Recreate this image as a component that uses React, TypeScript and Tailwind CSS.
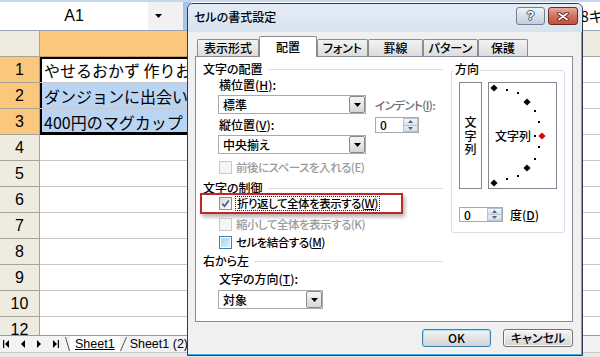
import React from 'react';

const JP = "font-['Noto_Sans_CJK_JP',sans-serif] [font-feature-settings:'palt']";

const rows = [
  { n: '1', text: 'やせるおかず 作りお', sel: true, cell: 'bg-white shadow-[inset_2px_2px_0_#000] border-[#c8c8c8]' },
  { n: '2', text: 'ダンジョンに出会い', sel: true, cell: 'bg-[#bad5f4] shadow-[inset_2px_0_0_#000] border-[#c8c8c8]' },
  { n: '3', text: '400円のマグカップ', sel: true, cell: 'bg-[#bad5f4] shadow-[inset_2px_-2px_0_#000] border-black' },
  { n: '4', text: '', sel: false, cell: 'bg-white border-[#c8c8c8]' },
  { n: '5', text: '', sel: false, cell: 'bg-white border-[#c8c8c8]' },
  { n: '6', text: '', sel: false, cell: 'bg-white border-[#c8c8c8]' },
  { n: '7', text: '', sel: false, cell: 'bg-white border-[#c8c8c8]' },
  { n: '8', text: '', sel: false, cell: 'bg-white border-[#c8c8c8]' },
  { n: '9', text: '', sel: false, cell: 'bg-white border-[#c8c8c8]' },
  { n: '10', text: '', sel: false, cell: 'bg-white border-[#c8c8c8]' },
  { n: '12', text: '', sel: false, cell: 'bg-white border-[#c8c8c8]' },
];

function DownTri() {
  return (
    <svg width="7" height="4" viewBox="0 0 7 4">
      <path d="M0 0h7L3.5 4z" fill="#000" />
    </svg>
  );
}

function Sheet() {
  return (
    <div className="flex h-full flex-col">
      <div className="h-[2px] shrink-0 bg-[#c4d7ee]" />
      <div className="flex h-[29px] shrink-0 border-b border-[#9aa5b3]">
        <div className="flex w-[148px] items-center justify-center bg-white text-[16px]">A1</div>
        <div className="flex w-[35px] items-center bg-[#f1f1f1] pl-[7px]">
          <DownTri />
        </div>
        <div className="w-[8px] bg-[#a9c3e8]" />
        <div className={`flex flex-1 items-center justify-end overflow-hidden bg-white text-[15px] ${JP}`}>
          <span className="-mr-[3px] shrink-0 whitespace-nowrap">8キ</span>
        </div>
      </div>

      <div className="flex h-[26px] shrink-0">
        <div className="w-[40px] shrink-0 border-r border-b border-[#a6a496] bg-[#eeebe1]" />
        <div className="w-[500px] shrink-0 border-r border-b border-[#c99b5e] bg-[#fbc77c]" />
        <div className="flex-1 border-b border-[#a6a496] bg-[#eeebe1]" />
      </div>

      <div className="flex-1 overflow-hidden">
        {rows.map((r) => (
          <div key={r.n} className="flex h-[26px]">
            <div
              className={`flex w-[40px] shrink-0 items-center justify-center border-r border-b border-[#a6a496] text-[16px] ${
                r.sel ? 'bg-[#fbc77c]' : 'bg-[#eeebe1]'
              }`}
            >
              {r.n}
            </div>
            <div
              className={`flex w-[500px] shrink-0 items-center overflow-hidden whitespace-nowrap border-b pl-[4px] font-['Noto_Sans_CJK_JP',sans-serif] text-[16px] leading-none ${r.cell}`}
            >
              {r.text}
            </div>
            <div className="flex-1 border-b border-l border-[#c8c8c8]" />
          </div>
        ))}
      </div>

      <div className="flex h-[17px] shrink-0 items-center border-t border-[#9a9a9a] bg-[#f3f3f3] text-[12.5px]">
        <svg className="ml-[3px]" width="6" height="8" viewBox="0 0 6 8">
          <rect x="0" y="0" width="1.2" height="8" fill="#000" />
          <path d="M6 0v8L2 4z" fill="#000" />
        </svg>
        <svg className="ml-[12px]" width="4" height="8" viewBox="0 0 4 8">
          <path d="M4 0v8L0 4z" fill="#000" />
        </svg>
        <svg className="ml-[12px]" width="4" height="8" viewBox="0 0 4 8">
          <path d="M0 0v8L4 4z" fill="#000" />
        </svg>
        <svg className="ml-[12px]" width="6" height="8" viewBox="0 0 6 8">
          <path d="M0 0v8L4 4z" fill="#000" />
          <rect x="4.8" y="0" width="1.2" height="8" fill="#000" />
        </svg>
        <div className="ml-[6px] flex h-full items-stretch">
          <svg width="5" height="16" viewBox="0 0 5 16">
            <path d="M0.5 1L4.5 15" stroke="#555" fill="none" />
          </svg>
          <div className="flex items-center bg-white px-[5px] underline">Sheet1</div>
          <svg width="7" height="16" viewBox="0 0 7 16">
            <path d="M6.5 1L0.5 15" stroke="#555" fill="none" />
          </svg>
          <div className="ml-[3px] flex items-center whitespace-nowrap">Sheet1 (2)</div>
        </div>
      </div>
      <div className="h-[5px] shrink-0 border-t border-[#c8c8c8] bg-[#e9e9e9]" />
    </div>
  );
}

function Select({ value, className }: { value: string; className: string }) {
  return (
    <div className={`flex h-[19px] shrink-0 border border-[#a7abb0] bg-white ${className}`}>
      <div className="flex flex-1 items-center pl-[4px] text-[12px] leading-none">{value}</div>
      <div className="flex w-[16px] items-center justify-center rounded-[2px] border border-[#8a8a8a] bg-linear-to-b from-[#f6f6f6] to-[#d6d6d6]">
        <DownTri />
      </div>
    </div>
  );
}

function Spin({ h }: { h: string }) {
  return (
    <div className={`flex w-[44px] shrink-0 border border-[#a7abb0] bg-white ${h}`}>
      <div className="flex flex-1 items-center pl-[4px] text-[12px] leading-none">0</div>
      <div className="flex w-[15px] flex-col">
        <div className="flex flex-1 items-center justify-center border border-[#b8c3d0] bg-linear-to-b from-[#f2f5f9] to-[#d9e2ec]">
          <svg width="5" height="3" viewBox="0 0 5 3">
            <path d="M0 3h5L2.5 0z" fill="#4e6286" />
          </svg>
        </div>
        <div className="flex flex-1 items-center justify-center border border-t-0 border-[#b8c3d0] bg-linear-to-b from-[#e9eef4] to-[#d3dde8]">
          <svg width="5" height="3" viewBox="0 0 5 3">
            <path d="M0 0h5L2.5 3z" fill="#4e6286" />
          </svg>
        </div>
      </div>
    </div>
  );
}

function Check({ kind }: { kind: 'on' | 'off' | 'disabled' | 'hot' }) {
  const box =
    kind === 'disabled'
      ? 'border-[#c9c9c9] bg-[#f4f4f4]'
      : kind === 'hot'
      ? 'border-[#3c7fb1] bg-white'
      : 'border-[#8e8f8f] bg-linear-to-br from-[#dcdcdc] to-white';
  return (
    <span className={`flex h-[13px] w-[13px] shrink-0 items-center justify-center border ${box}`}>
      {kind === 'hot' && <span className="h-[9px] w-[9px] bg-linear-to-br from-[#9fd5f3] to-[#dcf1fb]" />}
      {kind === 'on' && (
        <svg width="11" height="11" viewBox="0 0 11 11">
          <path d="M2.3 5.6L4.5 8.2L8.8 2.4" stroke="#485a8c" strokeWidth="1.7" fill="none" />
        </svg>
      )}
    </span>
  );
}

function GroupLabel({ text, className }: { text: string; className: string }) {
  return (
    <div className={`flex h-[14px] items-center pl-[7px] ${className}`}>
      <span className="shrink-0">{text}</span>
      <span className="ml-[5px] h-px flex-1 bg-[#d5dfe5]" />
    </div>
  );
}

function Arc() {
  const big = [
    [5, 5],
    [38, 19],
    [38, 85],
    [5, 100],
  ];
  const dots = [
    [18, 7],
    [29, 10],
    [46, 28],
    [50, 39],
    [50, 64],
    [46, 76],
    [29, 93],
    [18, 96],
    [46, 53],
  ];
  const dia = (x: number, y: number) => `M${x} ${y - 3.6}L${x + 3.6} ${y}L${x} ${y + 3.6}L${x - 3.6} ${y}Z`;
  return (
    <svg width="67" height="105" viewBox="0 0 67 105">
      {big.map(([x, y]) => (
        <path key={`${x}-${y}`} d={dia(x, y)} fill="#000" />
      ))}
      {dots.map(([x, y]) => (
        <rect key={`${x}-${y}`} x={x - 1} y={y - 1} width="2" height="2" fill="#000" />
      ))}
      <path d={dia(53, 53)} fill="#e00000" />
      <text x="6" y="58" fontSize="12" fontWeight="500" fontFamily="Noto Sans CJK JP, sans-serif" fill="#000">
        文字列
      </text>
    </svg>
  );
}

const tabs = [
  { label: '表示形式', w: 'w-[62px]' },
  { label: '配置', w: 'w-[58px]' },
  { label: 'フォント', w: 'w-[51px]' },
  { label: '罫線', w: 'w-[55px]' },
  { label: 'パターン', w: 'w-[55px]' },
  { label: '保護', w: 'w-[50px]' },
];

function Dialog() {
  return (
    <div
      className={`absolute left-[187px] top-[3px] flex h-[353px] w-[396px] flex-col rounded-t-[6px] border border-[#2f3b4a] bg-[#f0f0f0] text-[12px] font-medium leading-[14px] text-black shadow-[inset_-1px_-1px_0_#47b2e4] ${JP}`}
    >
      <div className="flex h-[28px] shrink-0 items-start rounded-t-[5px] bg-linear-to-b from-[#e4ecf6] to-[#d8e3f0] pl-[6px] pr-[4px] pt-[3px]">
        <div className="mt-[2px] flex-1 leading-[16px]">セルの書式設定</div>
        <div className="flex h-[18px] w-[29px] items-center justify-center rounded-[3px] border border-[#6f7e91] bg-linear-to-b from-[#eef3f9] to-[#bfcee1] font-['Liberation_Sans',sans-serif] text-[13px] font-bold text-white [text-shadow:-1px_0_#4a5563,1px_0_#4a5563,0_-1px_#4a5563,0_1px_#4a5563]">
          ?
        </div>
        <div className="ml-[3px] flex h-[18px] w-[30px] items-center justify-center rounded-[3px] border border-[#6d2b22] bg-linear-to-b from-[#eaa99c] via-[#d2705f] to-[#c44f3d]">
          <svg width="12" height="9" viewBox="0 0 12 9">
            <path d="M2 1.5L10 7.5M10 1.5L2 7.5" stroke="#5a2219" strokeWidth="3.6" strokeLinecap="round" />
            <path d="M2 1.5L10 7.5M10 1.5L2 7.5" stroke="#fff" strokeWidth="1.8" strokeLinecap="round" />
          </svg>
        </div>
      </div>

      <div className="flex h-[24px] shrink-0 items-end pl-[9px]">
        {tabs.map((t) =>
          t.label === '配置' ? (
            <div
              key={t.label}
              className={`relative z-10 -mb-px flex h-[21px] items-center justify-center rounded-t-[2px] border border-b-0 border-[#898c95] bg-white ${t.w}`}
            >
              {t.label}
            </div>
          ) : (
            <div
              key={t.label}
              className={`flex h-[17px] items-center justify-center rounded-t-[2px] border border-b-0 border-[#898c95] bg-linear-to-b from-[#f3f3f3] to-[#dcdcdc] ${t.w}`}
            >
              {t.label}
            </div>
          )
        )}
      </div>

      <div className="ml-[7px] flex h-[266px] w-[378px] shrink-0 border border-[#898c95] bg-white">
        <div className="flex w-[247px] shrink-0 flex-col pt-[5px]">
          <GroupLabel text="文字の配置" className="" />
          <div className="ml-[23px] mt-[2px]">
            横位置(<u>H</u>):
          </div>
          <div className="ml-[22px] mt-[3px] flex items-center">
            <Select value="標準" className="w-[148px]" />
            <span className="ml-[9px] whitespace-nowrap text-[11.5px] tracking-[-0.6px] text-[#6d6d6d]">
              インデント(<u>I</u>):
            </span>
          </div>
          <div className="mt-[3px] flex h-[16px] items-center">
            <span className="w-[179px] shrink-0 pl-[23px]">
              縦位置(<u>V</u>):
            </span>
            <Spin h="h-[16px]" />
          </div>
          <div className="ml-[22px] mt-[2px]">
            <Select value="中央揃え" className="w-[148px]" />
          </div>
          <div className="ml-[23px] mt-[6px] flex h-[14px] items-center text-[11.5px] tracking-[-0.5px] text-[#9a9a9a]">
            <Check kind="disabled" />
            <span className="ml-[4px] whitespace-nowrap">前後にスペースを入れる(E)</span>
          </div>

          <GroupLabel text="文字の制御" className="mt-[7px]" />
          <div className="ml-[4px] -mt-[2px] flex h-[21px] w-[203px] items-center border-2 border-[#c0272b] pl-[17px] text-[11.5px] tracking-[-0.5px] shadow-[2px_3px_4px_rgba(0,0,0,0.3)]">
            <Check kind="on" />
            <span className="ml-[3px] whitespace-nowrap border border-dotted border-[#222] px-px leading-[13px]">
              折り返して全体を表示する(<u>W</u>)
            </span>
          </div>
          <div className="ml-[23px] mt-[3px] flex h-[14px] items-center text-[11.5px] tracking-[-0.5px] text-[#9a9a9a]">
            <Check kind="disabled" />
            <span className="ml-[4px] whitespace-nowrap">縮小して全体を表示する(K)</span>
          </div>
          <div className="ml-[23px] mt-[4px] flex h-[14px] items-center text-[11.5px] tracking-[-0.5px]">
            <Check kind="hot" />
            <span className="ml-[4px] whitespace-nowrap">
              セルを結合する(<u>M</u>)
            </span>
          </div>

          <GroupLabel text="右から左" className="mt-[5px]" />
          <div className="ml-[23px] mt-[4px]">
            文字の方向(<u>T</u>):
          </div>
          <div className="ml-[22px] mt-[4px]">
            <Select value="対象" className="w-[105px]" />
          </div>
        </div>

        <div className="ml-[8px] mt-[13px] h-[163px] w-[114px] shrink-0 rounded-[3px] border border-[#d5dfe5]">
          <div className="-mt-[9px] ml-[2px] w-fit bg-white px-px">方向</div>
          <div className="ml-[7px] mt-[6px] flex gap-[6px]">
            <div className="flex h-[107px] w-[23px] flex-col items-center justify-center border border-[#828790] leading-[13.5px]">
              <span>文</span>
              <span>字</span>
              <span>列</span>
            </div>
            <div className="h-[107px] w-[69px] border border-[#828790]">
              <Arc />
            </div>
          </div>
          <div className="ml-[7px] mt-[18px] flex items-center">
            <Spin h="h-[15px]" />
            <span className="ml-[7px]">
              度(<u>D</u>)
            </span>
          </div>
        </div>
      </div>

      <div className="mt-[7px] flex justify-end gap-[12px] pr-[9px]">
        <div className="flex h-[18px] w-[69px] items-center justify-center rounded-[3px] border border-[#3c7fb1] bg-linear-to-b from-[#f4f4f4] to-[#d4d4d4] shadow-[inset_0_0_0_1px_#a6e0f8]">
          OK
        </div>
        <div className="flex h-[18px] w-[70px] items-center justify-center rounded-[3px] border border-[#707070] bg-linear-to-b from-[#f4f4f4] to-[#d4d4d4] shadow-[inset_0_0_0_1px_#fcfcfc]">
          キャンセル
        </div>
      </div>
    </div>
  );
}

export default function App() {
  return (
    <div className="relative h-[357px] w-[600px] overflow-hidden bg-white font-['Liberation_Sans',sans-serif] text-black">
      <Sheet />
      <Dialog />
    </div>
  );
}
